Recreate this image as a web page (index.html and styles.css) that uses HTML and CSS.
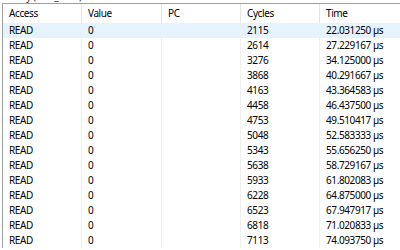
FILE: index.html
```html
<!DOCTYPE html>
<html lang="en">
<head>
  <meta charset="UTF-8">
  <title>History</title>
  <link rel="stylesheet" href="styles.css">
</head>
<body>
  <div class="panel">
    <div class="panel-title">History (DCP_0x20)</div>
    <div class="frame">
      <div class="row header">
        <div class="cell">Access</div>
        <div class="cell">Value</div>
        <div class="cell">PC</div>
        <div class="cell">Cycles</div>
        <div class="cell">Time</div>
      </div>
      <div id="rows"></div>
    </div>
  </div>

  <script>
    // Cycle counts, converted to time with the 96 MHz clock
    const cycles = [2115, 2614, 3276, 3868, 4163, 4458, 4753, 5048, 5343, 5638, 5933, 6228, 6523, 6818, 7113];
    const list = document.getElementById('rows');

    cycles.forEach(function(c, i) {
      const row = document.createElement('div');
      row.className = i === 0 ? 'row selected' : 'row';
      const us = (c / 96).toFixed(6) + ' \u00b5s';
      ['READ', '0', '', String(c), us].forEach(function(text) {
        const cell = document.createElement('div');
        cell.className = 'cell';
        cell.textContent = text;
        row.appendChild(cell);
      });
      list.appendChild(row);
    });
  </script>
</body>
</html>
```

FILE: styles.css
```css
body {
  margin: 0;
  background-color: #fff;
  font-family: 'Noto Sans', 'Open Sans', sans-serif;
  font-size: 10px;
  letter-spacing: -0.4px;
  color: #000;
  overflow: hidden;
}

.panel {
  padding-left: 2px;
}

.panel-title {
  height: 13px;
  line-height: 13px;
  margin-top: -10px;
  margin-left: -2px;
  color: #222;
}

.frame {
  border-top: 1px solid #a0a0a0;
  border-left: 1px solid #a0a0a0;
  width: 440px;
}

.row {
  display: grid;
  grid-template-columns: 79px 80px 79px 79px 120px;
  height: 15px;
  line-height: 15px;
}

.row.header {
  height: 19px;
  line-height: 19px;
}

.cell {
  padding-left: 6px;
  border-right: 1px solid #f0f0f0;
  white-space: nowrap;
  overflow: hidden;
}

.header .cell {
  border-right-color: #e5e5e5;
}

.row.selected {
  background-color: #e5f3ff;
}
```
